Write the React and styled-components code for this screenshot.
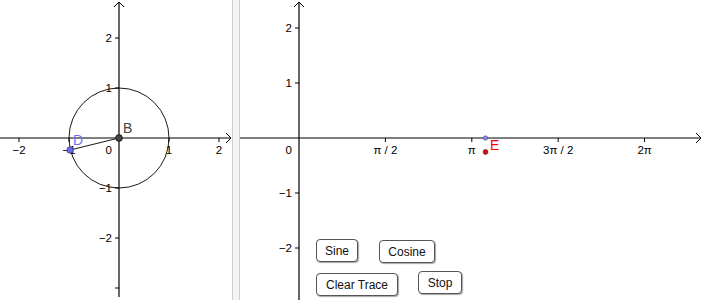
import React from "react";
import styled, { createGlobalStyle } from "styled-components";

const GlobalStyle = createGlobalStyle`
  html, body { margin: 0; padding: 0; background: #fff; }
  body { font-family: "Liberation Sans", Arial, sans-serif; }
`;

const Applet = styled.div`
  display: flex;
  width: 703px;
  height: 300px;
  overflow: hidden;
  background: #fff;
`;

const LeftView = styled.div`
  position: relative;
  width: 232px;
  height: 300px;
  flex: none;
`;

const Divider = styled.div`
  width: 6px;
  flex: none;
  background: #f4f4f4;
  border-left: 1px solid #cfcfcf;
  border-right: 1px solid #cfcfcf;
`;

const RightView = styled.div`
  position: relative;
  flex: 1;
  height: 300px;
`;

const Canvas = styled.svg`
  display: block;
  font-family: "Liberation Sans", Arial, sans-serif;
`;

const Button = styled.button`
  position: absolute;
  left: ${(p) => p.$x}px;
  top: ${(p) => p.$y}px;
  width: ${(p) => p.$w}px;
  height: 23px;
  padding: 0;
  background: #fff;
  border: 1px solid #555;
  border-radius: 4px;
  box-shadow: 1px 1px 1px rgba(0, 0, 0, 0.35);
  font-family: "Liberation Sans", Arial, sans-serif;
  font-size: 12px;
  color: #111;
  cursor: pointer;
`;

const AXIS = "#000";

function LeftGraph() {
  const ox = 119;
  const oy = 138;
  const u = 50;
  const xs = [-2, -1, 1, 2];
  const ys = [2, 1, -1, -2, -3];
  return (
    <Canvas width="232" height="300" viewBox="0 0 232 300">
      {/* axes */}
      <line x1="0" y1={oy} x2="231" y2={oy} stroke={AXIS} strokeWidth="1.2" />
      <polyline points={`226,${oy - 5} 231,${oy} 226,${oy + 5}`} fill="none" stroke={AXIS} strokeWidth="1" />
      <line x1={ox} y1="2" x2={ox} y2="297" stroke={AXIS} strokeWidth="1.2" />
      <polyline points={`${ox - 5},7 ${ox},2 ${ox + 5},7`} fill="none" stroke={AXIS} strokeWidth="1" />
      {xs.map((v) => (
        <g key={"x" + v}>
          <line x1={ox + v * u} y1={oy} x2={ox + v * u} y2={oy + 4} stroke={AXIS} />
          <text x={ox + v * u} y={oy + 16} fontSize="11.5" textAnchor="middle" fill="#000">
            {v < 0 ? "\u2212" + -v : v}
          </text>
        </g>
      ))}
      {ys.map((v) => (
        <g key={"y" + v}>
          <line x1={ox - 4} y1={oy - v * u} x2={ox} y2={oy - v * u} stroke={AXIS} />
          {v > -3 && (
            <text x={ox - 7} y={oy - v * u + 4} fontSize="11.5" textAnchor="end" fill="#000">
              {v < 0 ? "\u2212" + -v : v}
            </text>
          )}
        </g>
      ))}
      <text x={ox - 7} y={oy + 16} fontSize="11.5" textAnchor="end" fill="#000">0</text>
      {/* unit circle */}
      <circle cx={ox} cy={oy} r={u} fill="none" stroke="#000" strokeWidth="0.9" />
      <line x1={ox} y1={oy} x2="70" y2="150" stroke="#222" strokeWidth="1.1" />
      <circle cx="70" cy="150" r="3.2" fill="#6d6de8" stroke="#3b3b99" strokeWidth="0.8" />
      <circle cx={ox} cy={oy} r="3.4" fill="#444" stroke="#111" strokeWidth="0.8" />
      <text x="73" y="145" fontSize="14" fill="#7070f0">D</text>
      <text x="123" y="133" fontSize="14" fill="#444">B</text>
    </Canvas>
  );
}

function RightGraph() {
  const ox = 59;
  const oy = 138;
  const ux = 55;
  const uy = 55;
  const ticks = [
    { v: Math.PI / 2, label: "\u03c0 / 2" },
    { v: Math.PI, label: "\u03c0" },
    { v: (3 * Math.PI) / 2, label: "3\u03c0 / 2" },
    { v: 2 * Math.PI, label: "2\u03c0" },
  ];
  const ys = [2, 1, -1, -2];
  return (
    <Canvas width="463" height="300" viewBox="0 0 463 300">
      <line x1="0" y1={oy} x2="461" y2={oy} stroke={AXIS} strokeWidth="1.2" />
      <polyline points={`456,${oy - 5} 461,${oy} 456,${oy + 5}`} fill="none" stroke={AXIS} strokeWidth="1" />
      <line x1={ox} y1="2" x2={ox} y2="300" stroke={AXIS} strokeWidth="1.2" />
      <polyline points={`${ox - 5},7 ${ox},2 ${ox + 5},7`} fill="none" stroke={AXIS} strokeWidth="1" />
      {ticks.map((t) => {
        const x = ox + t.v * ux;
        return (
          <g key={t.label}>
            <line x1={x} y1={oy} x2={x} y2={oy + 4} stroke={AXIS} />
            <text x={x} y={oy + 16} fontSize="11.5" textAnchor="middle" fill="#000">
              {t.label}
            </text>
          </g>
        );
      })}
      {ys.map((v) => (
        <g key={"y" + v}>
          <line x1={ox - 4} y1={oy - v * uy} x2={ox} y2={oy - v * uy} stroke={AXIS} />
          <text x={ox - 7} y={oy - v * uy + 4} fontSize="11.5" textAnchor="end" fill="#000">
            {v < 0 ? "\u2212" + -v : v}
          </text>
        </g>
      ))}
      <text x={ox - 7} y={oy + 16} fontSize="11.5" textAnchor="end" fill="#000">0</text>
      <circle cx="245.5" cy={oy} r="2.2" fill="#8a8ae0" stroke="#4a4a99" strokeWidth="0.6" />
      <circle cx="245.5" cy="152" r="2.4" fill="#d01010" stroke="#700" strokeWidth="0.6" />
      <text x="250" y="150" fontSize="14" fill="#f00">E</text>
    </Canvas>
  );
}

export default function App() {
  return (
    <>
      <GlobalStyle />
      <Applet>
        <LeftView>
          <LeftGraph />
        </LeftView>
        <Divider />
        <RightView>
          <RightGraph />
          <Button $x={76} $y={239} $w={42}>Sine</Button>
          <Button $x={139} $y={240} $w={56}>Cosine</Button>
          <Button $x={76} $y={273} $w={82}>Clear Trace</Button>
          <Button $x={178} $y={271} $w={44}>Stop</Button>
        </RightView>
      </Applet>
    </>
  );
}
